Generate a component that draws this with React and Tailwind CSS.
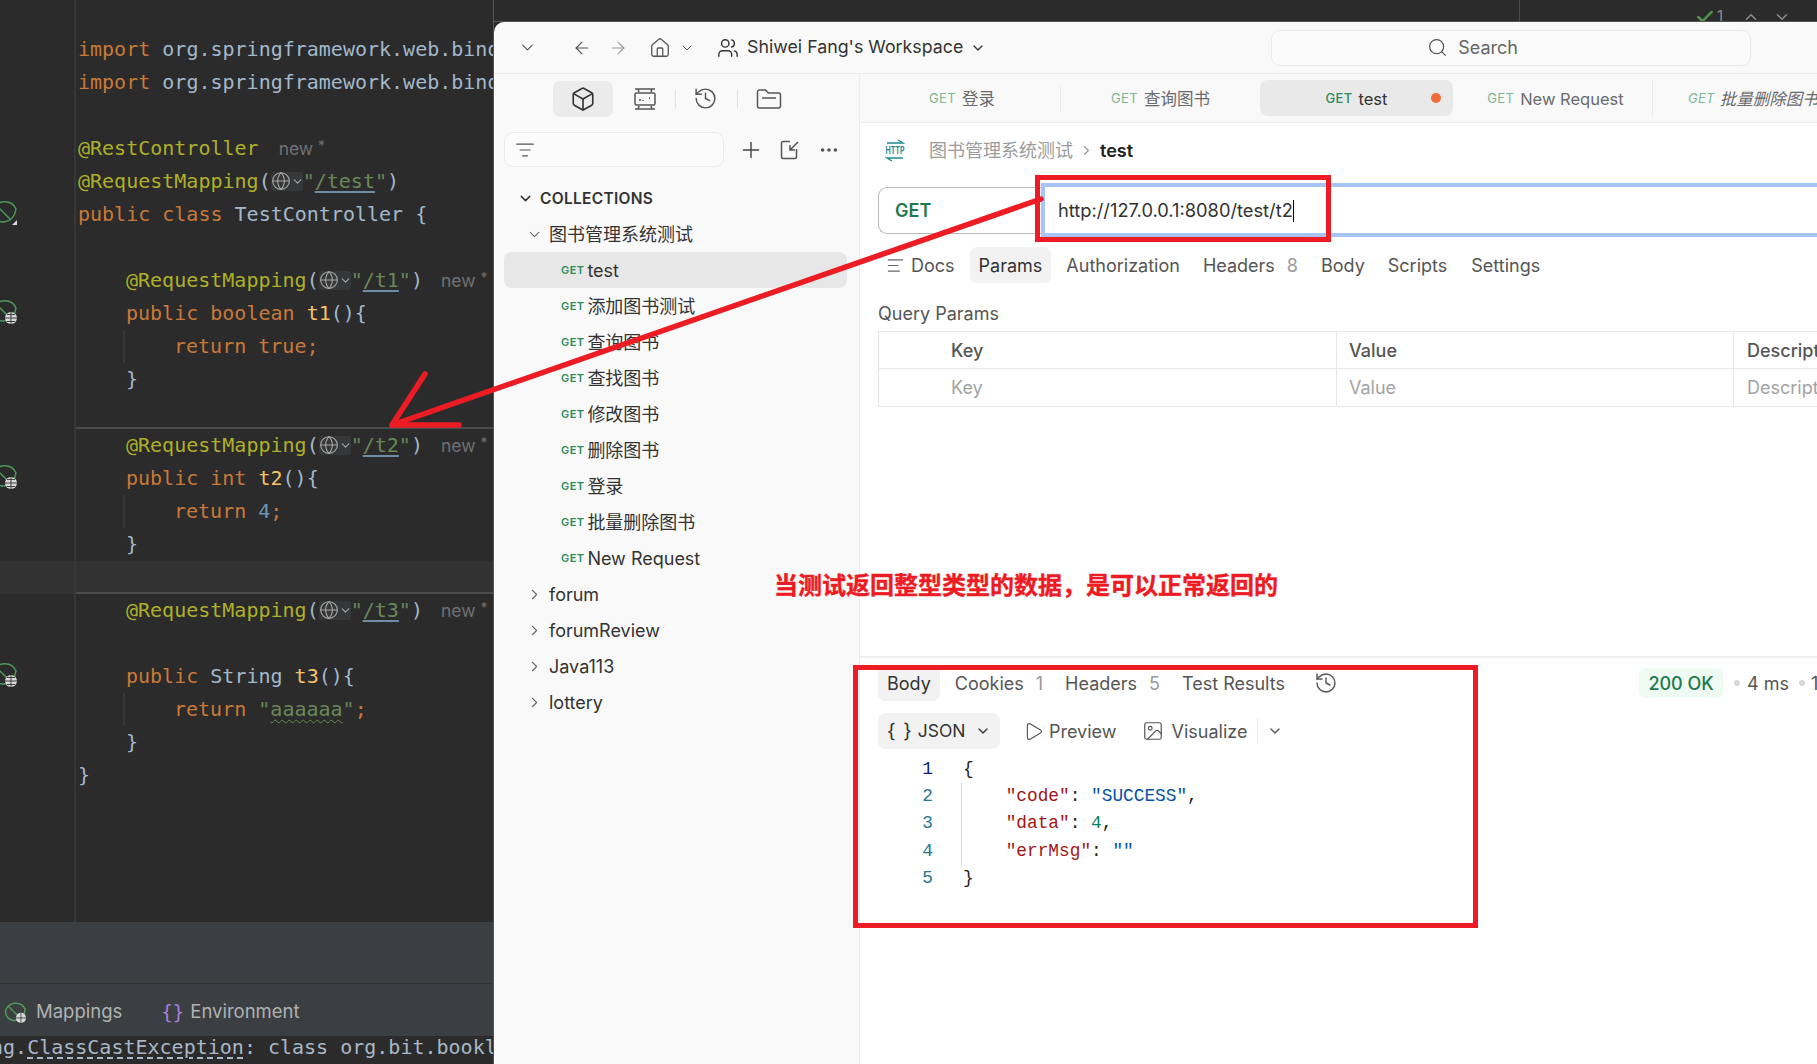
import React from 'react';
import { ChevronDown, ChevronRight, ChevronUp, ArrowLeft, ArrowRight, House, Users, Search, Box, History, ListFilter, Plus, Ellipsis, Globe, AlignLeft, Play, Image, Check } from 'lucide-react';

const UI = "[font-family:Inter,'Noto_Sans_CJK_SC',sans-serif]";

const K = ({ children }) => <span className="text-[#c9793a]">{children}</span>;
const A = ({ children }) => <span className="text-[#aeb02a]">{children}</span>;
const D = ({ children }) => <span className="text-[#a3b8cc]">{children}</span>;
const F = ({ children }) => <span className="text-[#f5c26b]">{children}</span>;

const Leaf = ({ slash }) => (
  <svg width="26" height="26" viewBox="0 0 26 26" fill="none" className="ml-[-9px] shrink-0 mt-[-6px]">
    <path d="M11 3c7-1 12 2 14 7-1 7-5 12-12 13C6 23 1 18 2 11c2-5 5-7 9-8z" stroke="#4f9a59" strokeWidth="1.5" />
    <path d="M6 7l14 14" stroke="#4f9a59" strokeWidth="1.5" />
    {slash ? (
      <path d="M26 21v5h-5z" fill="#d8d8d8" />
    ) : (
      <g>
        <circle cx="20" cy="20" r="6" fill="#d8d8d8" />
        <path d="M14 20h12M20 14v12M16 16.500h8M16 23.500h8" stroke="#3c3f41" strokeWidth="1" />
      </g>
    )}
  </svg>
);

const Chip = () => (
  <span className="inline-flex items-center w-[32px] h-[19px] bg-[#363738] rounded-[3px] align-[-3px]">
    <Globe size={20} className="text-[#a8a8a8] shrink-0" strokeWidth={1.3} />
    <ChevronDown size={13} className="text-[#a8a8a8] shrink-0" />
  </span>
);

const Hint = ({ className = 'ml-[18px]' }) => (
  <span className={`${UI} text-[#6f7173] text-[17.5px] leading-[0] ${className}`}>new <span className="text-[14px] relative top-[-4px] leading-[0]">*</span></span>
);

const Mapping = ({ p, hint = true }) => (
  <>
    <A>@RequestMapping</A><D>(</D><Chip />
    <span className="text-[#6a8759]">"<span className="underline underline-offset-[3px] decoration-[#6f8fa8]">{p}</span>"</span><D>)</D>
    {hint ? <Hint /> : null}
  </>
);

const codeLines = [
  {}, { c: <><K>import</K> <D>org.springframework.web.bind.annotation.RequestMapping;</D></> },
  { c: <><K>import</K> <D>org.springframework.web.bind.annotation.RestController;</D></> },
  {},
  { c: <><A>@RestController</A><Hint className="ml-[20px]" /></> },
  { c: <Mapping p="/test" hint={false} /> },
  { c: <><K>public class</K> <D>TestController {'{'}</D></>, icon: 'slash' },
  {},
  { i: 1, c: <Mapping p="/t1" /> },
  { i: 1, c: <><K>public boolean</K> <F>t1</F><D>(){'{'}</D></>, icon: 'leaf' },
  { i: 2, guide: true, c: <><K>return true;</K></> },
  { i: 1, c: <D>{'}'}</D> },
  { sep: true },
  { i: 1, c: <Mapping p="/t2" /> },
  { i: 1, c: <><K>public int</K> <F>t2</F><D>(){'{'}</D></>, icon: 'leaf' },
  { i: 2, guide: true, c: <><K>return</K> <span className="text-[#6897bb]">4</span><K>;</K></> },
  { i: 1, c: <D>{'}'}</D> },
  { hl: true, sep: true },
  { i: 1, c: <Mapping p="/t3" /> },
  {},
  { i: 1, c: <><K>public</K> <D>String</D> <F>t3</F><D>(){'{'}</D></>, icon: 'leaf' },
  { i: 2, guide: true, c: <><K>return</K> <span className="text-[#6a8759]">"<span className="underline decoration-wavy decoration-[#6a8759] underline-offset-[3px] decoration-1">aaaaaa</span>"</span><K>;</K></> },
  { i: 1, c: <D>{'}'}</D> },
  { c: <D>{'}'}</D> },
];

const indents = { 0: 'pl-0', 1: 'pl-[48px]', 2: 'pl-[96px]' };

function Ide() {
  return (
    <div className="w-[494px] shrink-0 h-full flex flex-col overflow-hidden bg-[#2b2b2b] border-r border-[#555]">
      <div className="h-[922px] shrink-0 flex flex-col [font-family:'DejaVu_Sans_Mono',monospace] text-[20px] relative">
        {codeLines.map((l, idx) => (
          <div key={idx} className={`h-[33px] shrink-0 flex whitespace-pre ${l.hl ? 'bg-[#323232]' : ''}`}>
            <div className="w-[76px] shrink-0 border-r-2 border-[#353738] flex items-center overflow-hidden">
              {l.icon === 'slash' ? <Leaf slash /> : l.icon === 'leaf' ? <Leaf /> : null}
            </div>
            <div className={`flex-1 min-w-0 overflow-hidden pl-[2px] ${l.sep ? 'border-b-2 border-[#4a4c4e]' : ''}`}>
              <div className={`${indents[l.i || 0]} h-[33px] leading-[33px] relative`}>
                {l.guide ? <span className="absolute left-[45px] top-0 w-[2px] h-[33px] bg-[#353738]" /> : null}
                {l.c}
              </div>
            </div>
          </div>
        ))}
        <div className="flex-1 flex"><div className="w-[76px] border-r-2 border-[#353738]" /></div>
      </div>
      <div className="h-[62px] shrink-0 bg-[#3c3f41] border-b border-[#323232]" />
      <div className={`h-[52px] shrink-0 bg-[#3c3f41] flex items-center pt-[4px] text-[18.5px] text-[#afb1b3] ${UI}`}>
        <svg width="22" height="22" viewBox="0 0 26 26" fill="none" className="ml-[4px]">
          <path d="M11 3c7-1 12 2 14 7-1 7-5 12-12 13C6 23 1 18 2 11c2-5 5-7 9-8z" stroke="#4f9a59" strokeWidth="1.8" />
          <path d="M6 7l14 14" stroke="#4f9a59" strokeWidth="1.6" />
          <circle cx="20" cy="20" r="6" fill="#d8d8d8" />
          <path d="M14 20h12M20 14v12" stroke="#3c3f41" strokeWidth="1" />
        </svg>
        <span className="ml-[10px]">Mappings</span>
        <span className="ml-[39px] w-[20px] text-[#a77fe0] text-[19px] leading-none [font-family:'DejaVu_Sans_Mono',monospace]">{'{}'}</span>
        <span className="ml-[9px]">Environment</span>
      </div>
      <div className="flex-1 bg-[#2b2b2b] whitespace-pre ml-[-9px] [font-family:'DejaVu_Sans_Mono',monospace] text-[20px] leading-[22px] text-[#a9b7c6]">
        ng.<span className="underline decoration-dashed decoration-[#a9b7c6] underline-offset-[3px]">ClassCastException</span>: class org.bit.bookl
      </div>
    </div>
  );
}

const MockIcon = () => (
  <svg width="24" height="24" viewBox="0 0 24 24" fill="none" stroke="#555" strokeWidth="1.5">
    <path d="M2 2h20M5 2l1 3M19 2l-1 3M2 22h20M5 22l1-3M19 22l-1-3" />
    <rect x="2" y="6" width="20" height="12" rx="1.500" />
    <path d="M7 14v-2M10 14v-1M16 11h1" />
  </svg>
);
const FolderIcon = () => (
  <svg width="26" height="22" viewBox="0 0 26 22" fill="none" stroke="#555" strokeWidth="1.5">
    <path d="M1.500 4a2 2 0 012-2h6l3 3h10a2 2 0 012 2v11a2 2 0 01-2 2h-19a2 2 0 01-2-2z" />
    <path d="M6 10h14" />
  </svg>
);
const ImportIcon = () => (
  <svg width="20" height="20" viewBox="0 0 20 20" fill="none" stroke="#555" strokeWidth="1.5">
    <path d="M10 1.500H3a1.500 1.500 0 00-1.500 1.500v14A1.500 1.500 0 003 18.500h12a1.500 1.500 0 001.500-1.500V9" />
    <path d="M18 2l-8 8M10 5v5h5" />
  </svg>
);
const HttpIcon = () => (
  <svg width="24" height="24" viewBox="0 0 24 24" fill="none">
    <path d="M4 5h16l-5-3" stroke="#1f8a96" strokeWidth="1.4" />
    <text x="12" y="16" textAnchor="middle" fontSize="10" fontWeight="700" fill="#1f8a96" fontFamily="Inter" textLength="19" lengthAdjust="spacingAndGlyphs">HTTP</text>
    <path d="M20 20H4l5 3" stroke="#1f8a96" strokeWidth="1.4" />
  </svg>
);

const Get = () => <span className="text-[11px] font-semibold tracking-[0.4px] text-[#2f8b57]">GET</span>;
const TabGet = ({ faded }) => <span className={`text-[13px] tracking-[0.3px] ${faded ? 'text-[#7db795]' : 'text-[#2f8b57] font-medium'}`}>GET</span>;

const items = ['test', '添加图书测试', '查询图书', '查找图书', '修改图书', '删除图书', '登录', '批量删除图书', 'New Request'];
const folders = ['forum', 'forumReview', 'Java113', 'lottery'];

function Sidebar() {
  return (
    <aside className="w-[366px] shrink-0 border-r border-[#ededed] bg-[#f9f9f9] flex flex-col text-[#333]">
      <div className="h-[49px] flex items-center pl-[59px]">
        <div className="w-[60px] h-[36px] rounded-[7px] bg-[#ebebeb] flex items-center justify-center">
          <Box size={26} strokeWidth={1.5} className="text-[#333]" />
        </div>
        <div className="ml-[20px] w-[24px]"><MockIcon /></div>
        <div className="ml-[18px] w-px h-[18px] bg-[#e2e2e2]" />
        <History size={25} strokeWidth={1.4} className="ml-[17px] text-[#555]" />
        <div className="ml-[19px] w-px h-[18px] bg-[#e2e2e2]" />
        <div className="ml-[18px]"><FolderIcon /></div>
      </div>
      <div className="mt-[9px] h-[35px] flex items-center pl-[10px]">
        <div className="w-[220px] h-[35px] rounded-[9px] border border-[#ebebeb] bg-[#fbfbfb] flex items-center pl-[10px]">
          <ListFilter size={20} strokeWidth={1.4} className="text-[#555]" />
        </div>
        <Plus size={26} strokeWidth={1.3} className="ml-[14px] text-[#444]" />
        <div className="ml-[16px]"><ImportIcon /></div>
        <Ellipsis size={22} className="ml-[18px] text-[#555]" />
      </div>
      <div className="mt-[14px] h-[35px] flex items-center pl-[23px] text-[15.5px] font-semibold tracking-[0.3px] text-[#333]">
        <ChevronDown size={17} strokeWidth={2} className="text-[#333]" />
        <span className="ml-[6px]">COLLECTIONS</span>
      </div>
      <div className="h-[36px] flex items-center pl-[32px] text-[18px]">
        <ChevronDown size={17} strokeWidth={1.5} className="text-[#666]" />
        <span className="ml-[6px]">图书管理系统测试</span>
      </div>
      {items.map((t, i) => (
        <div key={t} className={`h-[36px] ml-[10px] mr-[12px] flex items-center pl-[57px] rounded-[8px] text-[18px] ${i === 0 ? 'bg-[#e7e7e7]' : ''}`}>
          <Get />
          <span className="ml-[3px]">{t}</span>
        </div>
      ))}
      {folders.map((t) => (
        <div key={t} className="h-[36px] flex items-center pl-[32px] text-[18px]">
          <ChevronRight size={17} strokeWidth={1.5} className="text-[#666]" />
          <span className="ml-[6px]">{t}</span>
        </div>
      ))}
    </aside>
  );
}

const T = ({ children, w, active, last, className = '' }) => (
  <div className={`${w} h-[36px] shrink-0 flex items-center text-[16.5px] justify-center ${active ? 'bg-[#e9e9e9] rounded-[8px] text-[#333] relative' : 'text-[#6b6b6b]'} ${last ? 'border-r border-[#ebebeb]' : ''} ${className}`}>
    <span className="flex items-center pt-[2px]">{children}</span>
  </div>
);

const TabTxt = ({ children, className = '', dim }) => (
  <div className={`h-[36px] flex items-center rounded-[7px] text-[18px] whitespace-nowrap ${className}`}>{children}{dim ? <span className="ml-[12px] text-[#9a9a9a]">{dim}</span> : null}</div>
);

function Main() {
  return (
    <main className="flex-1 min-w-0 bg-white flex flex-col overflow-hidden text-[#555]">
      <div className="h-[49px] shrink-0 border-b border-[#ededed] bg-[#f9f9f9] flex items-center overflow-hidden whitespace-nowrap">
        <T w="w-[200px]" className="pl-[4px]"><TabGet faded /><span className="ml-[6px]">登录</span></T>
        <div className="w-px h-[27px] bg-[#ebebeb] shrink-0" />
        <T w="w-[199px]"><TabGet faded /><span className="ml-[6px]">查询图书</span></T>
        <T w="w-[193px]" active><TabGet /><span className="ml-[6px]">test</span><span className="absolute right-[12px] top-[13px] w-[10px] h-[10px] rounded-full bg-[#f26b3a]" /></T>
        <T w="w-[200px]" last className="pl-[6px]"><TabGet faded /><span className="ml-[6px]">New Request</span></T>
        <div className="pl-[35px] pt-[2px] italic text-[16.5px] text-[#6b6b6b] flex items-center shrink-0"><TabGet faded /><span className="ml-[5px]">批量删除图书</span></div>
      </div>
      <div className="h-[535px] shrink-0 border-b-2 border-[#eeeeee] flex flex-col overflow-hidden">
        <div className="h-[54px] shrink-0 flex items-center pl-[23px] text-[18px]">
          <HttpIcon />
          <span className="ml-[22px] text-[#9b9b9b]">图书管理系统测试</span>
          <ChevronRight size={15} className="ml-[6px] text-[#9b9b9b]" />
          <span className="ml-[6px] font-semibold text-[#222]">test</span>
        </div>
        <div className="mt-[6px] h-[54px] shrink-0 flex items-center pl-[18px]">
          <div className="w-[163px] h-[47px] shrink-0 rounded-l-[9px] border border-r-0 border-[#b9b9b9] flex items-center pl-[16px] font-semibold text-[18px] text-[#1f7a4d]">GET</div>
          <div className="flex-1 h-[54px] mr-[-20px] border-[4px] border-[#a6c4f7] flex items-center pl-[13px] pt-[2px] text-[18.3px] text-[#333]">
            http://127.0.0.1:8080/test/t2<span className="w-px h-[22px] bg-black" />
          </div>
        </div>
        <div className="mt-[10px] h-[36px] shrink-0 flex items-center pl-[26px]">
          <AlignLeft size={19} strokeWidth={1.5} className="text-[#666]" />
          <TabTxt className="ml-[6px]">Docs</TabTxt>
          <TabTxt className="ml-[15px] px-[9px] bg-[#f2f2f2] text-[#333]">Params</TabTxt>
          <TabTxt className="ml-[15px]">Authorization</TabTxt>
          <TabTxt className="ml-[23px]" dim="8">Headers</TabTxt>
          <TabTxt className="ml-[23px]">Body</TabTxt>
          <TabTxt className="ml-[23px]">Scripts</TabTxt>
          <TabTxt className="ml-[24px]">Settings</TabTxt>
        </div>
        <div className="mt-[18px] pl-[18px] h-[24px] shrink-0 flex items-center text-[18px]">Query Params</div>
        <div className="mt-[6px] ml-[18px] border border-[#e7e7e7] border-r-0 shrink-0 text-[18px]">
          <div className="h-[37px] flex border-b border-[#e7e7e7] font-medium">
            <div className="w-[458px] shrink-0 border-r border-[#e7e7e7] pl-[72px] flex items-center">Key</div>
            <div className="w-[397px] shrink-0 border-r border-[#e7e7e7] pl-[12px] flex items-center">Value</div>
            <div className="flex-1 pl-[13px] flex items-center overflow-hidden whitespace-nowrap">Description</div>
          </div>
          <div className="h-[37px] flex text-[#a3a3a3]">
            <div className="w-[458px] shrink-0 border-r border-[#e7e7e7] pl-[72px] flex items-center">Key</div>
            <div className="w-[397px] shrink-0 border-r border-[#e7e7e7] pl-[12px] flex items-center">Value</div>
            <div className="flex-1 pl-[13px] flex items-center overflow-hidden whitespace-nowrap">Description</div>
          </div>
        </div>
      </div>
      <div className="flex-1 flex flex-col min-h-0">
        <div className="mt-[7px] h-[36px] shrink-0 flex items-center pl-[18px]">
          <TabTxt className="px-[9px] bg-[#f2f2f2] text-[#333]">Body</TabTxt>
          <TabTxt className="ml-[15px]" dim="1">Cookies</TabTxt>
          <TabTxt className="ml-[22px]" dim="5">Headers</TabTxt>
          <TabTxt className="ml-[22px]">Test Results</TabTxt>
          <History size={24} strokeWidth={1.4} className="ml-[29px] text-[#555]" />
          <div className="ml-auto flex items-center whitespace-nowrap">
            <div className="h-[30px] w-[84px] rounded-[7px] bg-[#eefaf2] flex items-center justify-center text-[18px] font-medium text-[#1f7a4d]">200 OK</div>
            <span className="ml-[11px] w-[6px] h-[6px] rounded-full bg-[#d8d8d8]" />
            <span className="ml-[7px] text-[18px]">4 ms</span>
            <span className="ml-[10px] w-[6px] h-[6px] rounded-full bg-[#d8d8d8]" />
            <span className="ml-[6px] text-[18px] w-[6px] overflow-hidden">1</span>
          </div>
        </div>
        <div className="mt-[12px] h-[36px] shrink-0 flex items-center pl-[18px] text-[18px]">
          <div className="w-[122px] h-[36px] rounded-[8px] bg-[#f2f2f2] flex items-center pl-[9px] text-[#333]">
            <span className="text-[20px] tracking-[1px]">{'{ }'}</span>
            <span className="ml-[5px] text-[17.5px]">JSON</span>
            <ChevronDown size={16} className="ml-[10px]" />
          </div>
          <Play size={21} strokeWidth={1.3} className="ml-[23px] text-[#555]" />
          <span className="ml-[5px]">Preview</span>
          <Image size={22} strokeWidth={1.3} className="ml-[25px] text-[#555]" />
          <span className="ml-[8px]">Visualize</span>
          <span className="ml-[10px] w-px h-[26px] bg-[#ebebeb]" />
          <ChevronDown size={16} className="ml-[9px]" />
        </div>
        <div className="mt-[7px] pl-[18px] flex flex-col [font-family:'Liberation_Mono',monospace] text-[17.8px] leading-[27px] whitespace-pre">
          {[
            <span className="text-[#222]">{'{'}</span>,
            <><span className="text-[#a31515]">{'    "code"'}</span><span className="text-[#222]">: </span><span className="text-[#0451a5]">"SUCCESS"</span><span className="text-[#222]">,</span></>,
            <><span className="text-[#a31515]">{'    "data"'}</span><span className="text-[#222]">: </span><span className="text-[#098658]">4</span><span className="text-[#222]">,</span></>,
            <><span className="text-[#a31515]">{'    "errMsg"'}</span><span className="text-[#222]">: </span><span className="text-[#0451a5]">""</span></>,
            <span className="text-[#222]">{'}'}</span>,
          ].map((c, i) => (
            <div key={i} className="h-[27.2px] flex">
              <span className={`w-[55px] text-right ${i === 0 ? 'text-[#0b216f]' : 'text-[#237893]'}`}>{i + 1}</span>
              <span className={`ml-[28px] pl-[1px] ${i > 0 && i < 4 ? 'border-l border-[#d8d8d8]' : 'pl-[2px]'}`}>{c}</span>
            </div>
          ))}
        </div>
      </div>
    </main>
  );
}

function Postman() {
  return (
    <div className="flex-1 min-h-0 flex flex-col bg-[#f9f9f9] rounded-tl-[10px] overflow-hidden">
      <div className="h-[52px] shrink-0 border-b border-[#ededed] flex items-center pl-[24px] text-[#333] whitespace-nowrap">
        <ChevronDown size={19} strokeWidth={1.5} className="text-[#555]" />
        <ArrowLeft size={20} strokeWidth={1.4} className="ml-[35px] text-[#555]" />
        <ArrowRight size={20} strokeWidth={1.4} className="ml-[16px] text-[#999]" />
        <House size={22} strokeWidth={1.4} className="ml-[21px] text-[#555]" />
        <ChevronDown size={16} strokeWidth={1.5} className="ml-[8px] text-[#555]" />
        <Users size={22} strokeWidth={1.5} className="ml-[22px] text-[#333]" />
        <span className="ml-[8px] text-[17.8px]">Shiwei Fang's Workspace</span>
        <ChevronDown size={16} strokeWidth={2} className="ml-[7px]" />
        <div className="ml-[285px] w-[480px] h-[36px] rounded-[9px] border border-[#ebebeb] bg-[#fbfbfb] flex items-center pl-[155px] text-[18px] text-[#666]">
          <Search size={21} strokeWidth={1.4} className="text-[#555]" />
          <span className="ml-[10px]">Search</span>
        </div>
      </div>
      <div className="flex-1 min-h-0 flex">
        <Sidebar />
        <Main />
      </div>
    </div>
  );
}

export default function App() {
  return (
    <div className={`relative w-[1817px] h-[1064px] overflow-hidden flex bg-[#2b2b2b] ${UI}`}>
      <Ide />
      <div className="flex-1 min-w-0 flex flex-col">
        <div className="h-[22px] shrink-0 bg-[#2b2b2b] border-b border-[#555] flex items-center overflow-hidden">
          <div className="ml-[1025px] w-px h-full bg-[#4a4c4e]" />
          <div className="ml-[175px] mt-[12px] flex items-center text-[#8b8d8f] text-[15px]">
            <Check size={20} strokeWidth={3} className="text-[#4f8f4f]" />
            <span className="ml-[2px]">1</span>
            <ChevronUp size={18} className="ml-[19px]" />
            <ChevronDown size={18} className="ml-[13px]" />
          </div>
        </div>
        <Postman />
      </div>

      <svg className="absolute inset-0 w-full h-full pointer-events-none" viewBox="0 0 1817 1064" fill="none">
        <path d="M1041 199 L392 425" stroke="#ed1c24" strokeWidth="5.500" strokeLinecap="round" />
        <path d="M425 374 L392 425 L459 425" stroke="#ed1c24" strokeWidth="5.500" strokeLinecap="round" strokeLinejoin="round" />
      </svg>
      <div className="absolute left-[1035px] top-[175px] w-[296px] h-[67px] border-[5px] border-[#ed1c24] pointer-events-none" />
      <div className="absolute left-[853px] top-[665px] w-[625px] h-[263px] border-[5px] border-[#ed1c24] pointer-events-none" />
      <div className="absolute left-[774px] top-[566px] text-[24px] leading-[36px] font-bold text-[#ed1c24] whitespace-nowrap [font-family:'Noto_Sans_CJK_SC',sans-serif] [-webkit-text-stroke:0.4px_#ed1c24]">当测试返回整型类型的数据，是可以正常返回的</div>
    </div>
  );
}
